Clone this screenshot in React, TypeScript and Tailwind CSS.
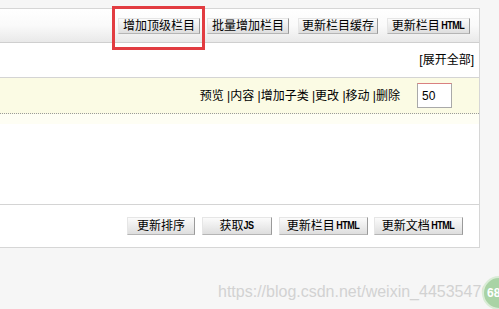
import React from 'react';

const font = { fontFamily: '"Liberation Sans", "Noto Sans CJK SC", sans-serif' };

const Btn: React.FC<{ label: string; latin?: string; w: string; h?: string; extra?: string }> = ({
  label,
  latin,
  w,
  h = 'h-[16px]',
  extra = '',
}) => (
  <button
    className={`${w} ${h} ${extra} flex items-center justify-center text-[12px] leading-none text-black bg-gradient-to-b from-[#fbfbfb] to-[#dedede] border border-[#e6e6e6] border-r-[#9a9a9a] border-b-[#b5b5b5] whitespace-nowrap`}
  >
    {label}
    {latin && <span className="text-[10px] tracking-[-0.6px] font-bold scale-x-90">{latin}</span>}
  </button>
);

export default function App() {
  return (
    <div className="relative w-[499px] h-[309px] overflow-hidden bg-[#f6f6f6]" style={font}>
      <div className="pt-[8px]">
        <div className="ml-[-1px] w-[481px] bg-white border border-[#d6d6d6]">
          {/* header toolbar */}
          <div className="h-[34px] flex items-center justify-end gap-[7px] pr-[9px] bg-gradient-to-b from-[#ffffff] via-[#fafafa] to-[#e9e9e9] border-b border-[#cfcfcf]">
            <Btn label="增加顶级栏目" w="w-[82px]" />
            <Btn label="批量增加栏目" w="w-[82px]" />
            <Btn label="更新栏目缓存" w="w-[80px]" extra="ml-[2px]" />
            <Btn label="更新栏目" latin="HTML" w="w-[83px]" extra="ml-[2px]" />
          </div>

          {/* expand row */}
          <div className="h-[35px] flex items-center justify-end pr-[5px] text-[12px] text-black border-b border-[#d4d4d4]">
            [展开全部]
          </div>

          {/* category row */}
          <div className="h-[36px] flex items-center justify-end pr-[27px] bg-[#fbfbe4] border-b border-dotted border-[#9a9a9a]">
            <span className="text-[12px] text-black whitespace-pre">预览 |内容 |增加子类 |更改 |移动 |删除</span>
            <input
              defaultValue="50"
              className="ml-[17px] w-[35px] h-[25px] px-[4px] text-[12px] bg-white border border-[#a9a9a9] border-t-[#d98080] border-t-dotted outline-none"
            />
          </div>
          <div className="h-[10px] bg-[#fefef4]" />
          <div className="h-[80px]" />

          {/* bottom actions */}
          <div className="h-[43px] flex items-center justify-end gap-[7px] pr-[16px] border-t border-[#d4d4d4]">
            <Btn label="更新排序" w="w-[68px]" h="h-[18px]" />
            <Btn label="获取" latin="JS" w="w-[70px]" h="h-[18px]" />
            <Btn label="更新栏目" latin="HTML" w="w-[89px]" h="h-[18px]" />
            <Btn label="更新文档" latin="HTML" w="w-[89px]" h="h-[18px]" extra="-ml-[1px]" />
          </div>
        </div>
      </div>

      {/* annotation box */}
      <div className="absolute left-[112px] top-[6px] w-[93px] h-[44px] border-[3px] border-[#e23c41]" />

      {/* watermark */}
      <div className="absolute left-[218px] top-[280px] text-[16px] text-[#d2d2d2] whitespace-nowrap">
        https://blog.csdn.net/weixin_44535476
      </div>
      <div className="absolute left-[482px] top-[276px] w-[34px] h-[34px] rounded-full bg-[#a9d3a5] border-2 border-[#d9ecd6] flex items-start pl-[3px] pt-[6px] text-[12px] font-bold text-white">
        68
      </div>
    </div>
  );
}
